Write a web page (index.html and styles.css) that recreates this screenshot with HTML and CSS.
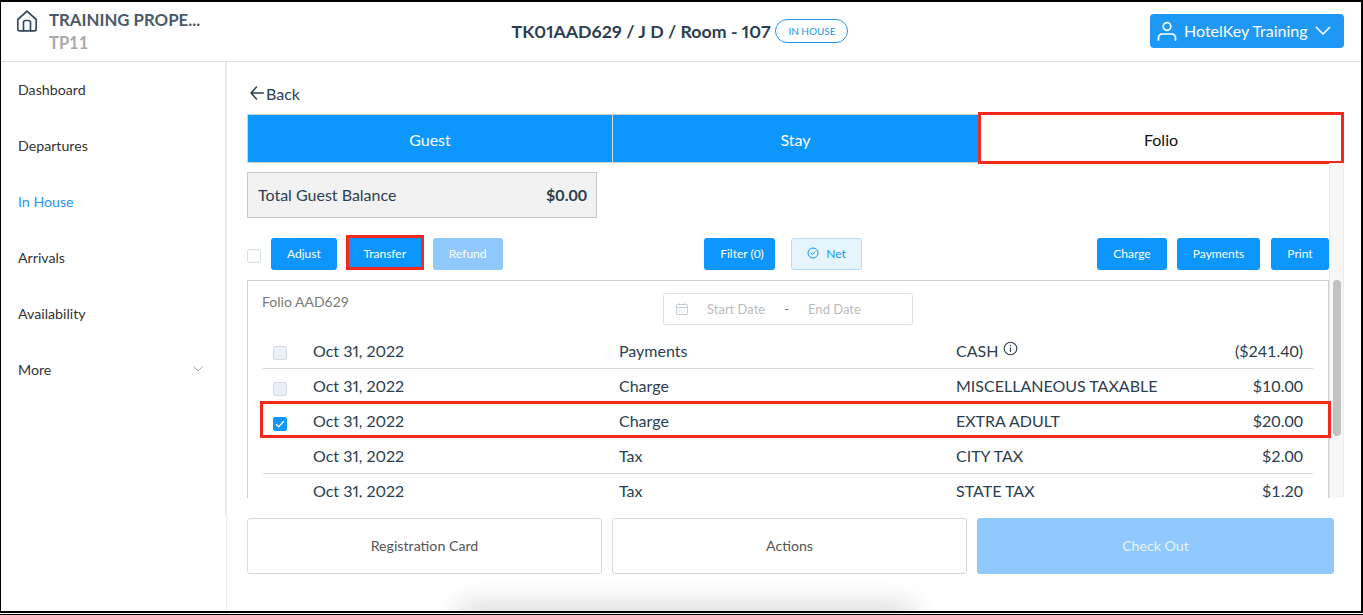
FILE: index.html

```html
<!DOCTYPE html>
<html lang="en">
<head>
  <meta charset="UTF-8" />
  <title>Folio</title>
  <link rel="stylesheet" href="styles.css">
</head>
<body>
  <div class="frame">
    <header class="topbar">
      <div class="property">
        <svg class="home-icon" width="22" height="22" viewBox="0 0 22 22" fill="none" stroke="#34495e" stroke-width="1.7" stroke-linejoin="round" stroke-linecap="round">
          <path d="M1.800 9.500 11 1.200l9.200 8.300V19a1.800 1.800 0 0 1-1.800 1.800H3.600A1.800 1.800 0 0 1 1.800 19z"/>
          <path d="M7.500 20.800V12.500a2 2 0 0 1 2-2h3a2 2 0 0 1 2 2v8.300"/>
        </svg>
        <div>
          <div class="property-name">TRAINING PROPE...</div>
          <div class="property-code">TP11</div>
        </div>
      </div>
      <div class="stay-title">
        <span>TK01AAD629 / J D / Room - 107</span>
        <span class="status-pill">IN HOUSE</span>
      </div>
      <button class="user-btn">
        <svg width="20" height="20" viewBox="0 0 20 20" fill="none" stroke="#fff" stroke-width="1.7" stroke-linecap="round">
          <circle cx="10" cy="5.500" r="3.800"/>
          <path d="M1.500 19v-2.500a3.500 3.500 0 0 1 3.500-3.500h10a3.500 3.500 0 0 1 3.500 3.500V19"/>
        </svg>
        <span>HotelKey Training</span>
        <svg width="16" height="10" viewBox="0 0 16 10" fill="none" stroke="#fff" stroke-width="1.700" stroke-linecap="round" stroke-linejoin="round">
          <path d="M1.500 1.500 8 8l6.500-6.500"/>
        </svg>
      </button>
    </header>

    <div class="layout">
      <div class="sidebar">
        <nav class="side-nav">
          <a>Dashboard</a>
          <a>Departures</a>
          <a class="active">In House</a>
          <a>Arrivals</a>
          <a>Availability</a>
          <a class="more">More
            <svg width="10" height="6" viewBox="0 0 10 6" fill="none" stroke="#9aa5b1" stroke-width="1">
              <path d="M.5.500 5 5 9.500.500"/>
            </svg>
          </a>
        </nav>
      </div>

      <main class="content">
        <div class="back">
          <svg width="14" height="14" viewBox="0 0 14 14" fill="none" stroke="#2c3e50" stroke-width="1.500" stroke-linecap="round" stroke-linejoin="round">
            <path d="M6.500 1 1 7l5.500 6M1 7h12.500"/>
          </svg>
          <span>Back</span>
        </div>

        <div class="tabs">
          <div class="tab">Guest</div>
          <div class="tab">Stay</div>
          <div class="tab tab-active">Folio</div>
        </div>

        <div class="scroll-area">
          <div class="scroll-body">
            <div class="balance">
              <span>Total Guest Balance</span>
              <strong>$0.00</strong>
            </div>

            <div class="toolbar">
              <div class="tool-group">
                <span class="check check-plain"></span>
                <button class="btn">Adjust</button>
                <button class="btn btn-marked">Transfer</button>
                <button class="btn btn-off">Refund</button>
              </div>
              <div class="tool-group mid-group">
                <button class="btn btn-filter">Filter (0)</button>
                <button class="btn btn-net">
                  <svg width="12" height="12" viewBox="0 0 12 12" fill="none" stroke="#0d96fb" stroke-width="1">
                    <circle cx="6" cy="6" r="5"/>
                    <path d="M3.800 6.200 5.400 7.700 8.200 4.700"/>
                  </svg>
                  Net
                </button>
              </div>
              <div class="tool-group right-group">
                <button class="btn btn-charge">Charge</button>
                <button class="btn btn-payments">Payments</button>
                <button class="btn btn-print">Print</button>
              </div>
            </div>

            <section class="folio">
              <div class="folio-head">
                <span class="folio-name">Folio AAD629</span>
                <div class="date-range">
                  <svg width="14" height="14" viewBox="0 0 14 14" fill="none" stroke="#c5cad1" stroke-width="1">
                    <rect x="1.500" y="2.500" width="11" height="10" rx="1"/>
                    <path d="M1.500 5.500h11M4 1v2M10 1v2M4 8h1M6.500 8h1M9 8h1M4 10h1M6.500 10h1M9 10h1"/>
                  </svg>
                  <span class="date-start">Start Date</span>
                  <span class="date-dash">-</span>
                  <span>End Date</span>
                </div>
              </div>

              <div class="row row-line">
                <span class="cell-check"><span class="check"></span></span>
                <span class="cell-date">Oct 31, 2022</span>
                <span class="cell-type">Payments</span>
                <span class="cell-desc">CASH
                  <svg class="info-icon" width="15" height="15" viewBox="0 0 15 15" fill="none" stroke="#2c3e50" stroke-width="1.100">
                    <circle cx="7.500" cy="7.500" r="6.300"/>
                    <path d="M7.500 6.500v4.500M7.500 4v1.300"/>
                  </svg>
                </span>
                <span class="cell-amount">($241.40)</span>
              </div>
              <div class="row">
                <span class="cell-check"><span class="check"></span></span>
                <span class="cell-date">Oct 31, 2022</span>
                <span class="cell-type">Charge</span>
                <span class="cell-desc">MISCELLANEOUS TAXABLE</span>
                <span class="cell-amount">$10.00</span>
              </div>
              <div class="row row-marked">
                <span class="cell-check">
                  <span class="check check-on">
                    <svg width="10" height="8" viewBox="0 0 10 8" fill="none" stroke="#fff" stroke-width="1.300">
                      <path d="M1 4.200 3.700 6.800 9 1"/>
                    </svg>
                  </span>
                </span>
                <span class="cell-date">Oct 31, 2022</span>
                <span class="cell-type">Charge</span>
                <span class="cell-desc">EXTRA ADULT</span>
                <span class="cell-amount">$20.00</span>
              </div>
              <div class="row row-line">
                <span class="cell-check"></span>
                <span class="cell-date">Oct 31, 2022</span>
                <span class="cell-type">Tax</span>
                <span class="cell-desc">CITY TAX</span>
                <span class="cell-amount">$2.00</span>
              </div>
              <div class="row">
                <span class="cell-check"></span>
                <span class="cell-date">Oct 31, 2022</span>
                <span class="cell-type">Tax</span>
                <span class="cell-desc">STATE TAX</span>
                <span class="cell-amount">$1.20</span>
              </div>
            </section>
          </div>

          <div class="scrollbar"><div class="scroll-thumb"></div></div>
        </div>

        <div class="actions">
          <button class="action">Registration Card</button>
          <button class="action">Actions</button>
          <button class="action action-off">Check Out</button>
        </div>
      </main>
    </div>
    <div class="bottom-shadow"></div>
  </div>
  <div class="edge-line"></div>
</body>
</html>
```

FILE: styles.css

```css
* {
  box-sizing: border-box;
}
html, body {
  margin: 0;
  height: 615px;
  overflow: hidden;
  background: #fff;
}
body {
  font-family: Lato, "Open Sans", sans-serif;
  color: #2c3e50;
}
button {
  font-family: inherit;
  cursor: pointer;
}
.frame {
  position: relative;
  height: 613px;
  border-top: 2px solid #000;
  border-left: 1px solid #000;
  border-right: 2px solid #000;
  border-bottom: 2px solid #000;
  display: flex;
  flex-direction: column;
  overflow: hidden;
}
.edge-line {
  height: 1px;
  margin-top: 1px;
  background: #000;
}

/* top bar */
.topbar {
  height: 60px;
  flex: none;
  border-bottom: 1px solid #e0e0e0;
  display: grid;
  grid-template-columns: 1fr auto 1fr;
  align-items: center;
  padding: 0 17px 0 15px;
}
.property {
  display: flex;
  align-items: flex-start;
  gap: 11px;
  align-self: start;
  margin-top: 8px;
}
.property-name {
  font-size: 16.8px;
  font-weight: 700;
  color: #4a5a6a;
  line-height: 20px;
  white-space: nowrap;
}
.property-code {
  font-size: 16.5px;
  font-weight: 700;
  color: #a8a8a8;
  line-height: 26px;
}
.stay-title {
  display: flex;
  align-items: center;
  gap: 5px;
  font-size: 17.75px;
  font-weight: 700;
  font-variant-numeric: proportional-nums;
  color: #2c3e50;
  margin-top: -1px;
}
.status-pill {
  height: 24px;
  width: 73px;
  border: 1px solid #2196f3;
  border-radius: 12px;
  font-size: 10px;
  font-weight: 400;
  color: #2196f3;
  display: flex;
  align-items: center;
  justify-content: center;
}
.user-btn {
  justify-self: end;
  width: 194px;
  height: 34px;
  background: #1e98f5;
  border: none;
  border-radius: 4px;
  color: #fff;
  font-size: 16px;
  display: flex;
  align-items: center;
  gap: 7px;
  padding: 0 9px 0 7px;
  margin-top: -2px;
}

/* sidebar */
.layout {
  flex: 1;
  display: flex;
  min-height: 0;
}
.sidebar {
  width: 226px;
  flex: none;
  border-right: 1px solid #ececec;
}
.side-nav {
  height: 453px;
  border-right: 1px solid #e3e3e3;
  display: flex;
  flex-direction: column;
}
.side-nav a {
  height: 56px;
  display: flex;
  align-items: center;
  justify-content: space-between;
  padding: 0 22px 2px 17px;
  font-size: 14.2px;
  color: #333;
}
.side-nav a.active {
  color: #1e98f5;
}

/* main */
.content {
  flex: 1;
  min-width: 0;
  padding: 0 17px 0 20px;
  display: flex;
  flex-direction: column;
}
.back {
  height: 52px;
  padding: 10px 0 0 3px;
  display: flex;
  align-items: center;
  gap: 2px;
  font-size: 16px;
}
.tabs {
  display: grid;
  grid-template-columns: 366px 366px 1fr;
  height: 49px;
  flex: none;
}
.tab {
  background: #0d96fb;
  color: #fff;
  font-size: 16px;
  display: flex;
  align-items: center;
  justify-content: center;
  padding-top: 2px;
  border-top: 1px solid #d0d0d0;
  border-bottom: 1px solid #d0d0d0;
  border-right: 1px solid #d8d8d8;
}
.tab:first-child {
  border-left: 1px solid #d0d0d0;
}
.tab-active {
  background: #fff;
  color: #111;
  border: none;
  padding-top: 3px;
  margin: -2px 0 -1px -1px;
  outline: 3px solid #f5281c;
  outline-offset: -3px;
}
.scroll-area {
  height: 335px;
  flex: none;
  display: flex;
  overflow: hidden;
}
.scroll-body {
  flex: 1;
  min-width: 0;
}
.scrollbar {
  width: 15px;
  flex: none;
  background: #f7f7f7;
  border-left: 1px solid #e8e8e8;
  border-right: 1px solid #ececec;
  padding: 117px 2px 0 3px;
}
.scroll-thumb {
  height: 156px;
  background: #c1c1c1;
  border-radius: 5px;
}
.balance {
  width: 350px;
  height: 46px;
  margin-top: 9px;
  background: #f2f2f2;
  border: 1px solid #c8c8c8;
  padding: 0 9px 2px 10px;
  display: flex;
  align-items: center;
  justify-content: space-between;
  font-size: 16px;
}
.toolbar {
  margin-top: 20px;
  height: 32px;
  display: grid;
  grid-template-columns: 457px 393px 1fr;
}
.tool-group {
  display: flex;
  align-items: flex-end;
  gap: 9px;
  height: 32px;
}
.mid-group {
  gap: 16px;
}
.right-group {
  justify-content: flex-end;
  gap: 10px;
}
.btn {
  height: 32px;
  padding: 0 16px 2px;
  background: #0d96fb;
  color: #fff;
  border: none;
  border-radius: 3px;
  font-size: 12px;
  flex: none;
}
.btn-marked {
  width: 78px;
  height: 35px;
  padding-top: 3px;
  border-radius: 0;
  outline: 3px solid #f5281c;
  outline-offset: -3px;
}
.btn-off {
  background: #8fc9fd;
}
.btn-filter {
  width: 71px;
  padding: 0 0 2px 5px;
}
.btn-net {
  width: 71px;
  display: flex;
  align-items: center;
  justify-content: center;
  gap: 7px;
  background: #e6f4fe;
  color: #0d96fb;
  border: 1px solid #b5dcfb;
  padding: 0 0 2px;
}
.btn-charge {
  width: 70px;
  padding: 0 0 2px;
}
.btn-payments {
  width: 83px;
  padding: 0 0 2px;
}
.btn-print {
  width: 58px;
  margin-left: 1px;
  padding: 0 0 2px;
}
.check {
  width: 14px;
  height: 14px;
  border: 1px solid #d5dae3;
  border-radius: 2px;
  background: #eaf0f8;
  display: flex;
  align-items: center;
  justify-content: center;
  flex: none;
}
.check-plain {
  background: #fff;
  margin: 0 1px 7px 0;
}
.check-on {
  background: #0d96fb;
  border-color: #0d96fb;
}

/* folio table */
.folio {
  margin-top: 10px;
  height: 240px;
  border: 1px solid #d0d0d0;
  padding: 0 15px;
}
.folio-head {
  height: 53px;
  display: flex;
  align-items: flex-start;
}
.folio-name {
  width: 400px;
  margin-top: 12px;
  margin-left: -1px;
  margin-right: 1px;
  font-size: 14px;
  color: #7a7a7a;
}
.date-range {
  width: 250px;
  height: 32px;
  margin-top: 12px;
  border: 1px solid #dde1e8;
  border-radius: 3px;
  display: flex;
  align-items: center;
  padding-left: 11px;
  font-size: 13px;
  color: #bcbcbc;
}
.date-start {
  margin-left: 18px;
}
.date-dash {
  margin: 0 19px;
  color: #777;
}
.row {
  position: relative;
  height: 35px;
  display: flex;
  align-items: center;
  padding-bottom: 2px;
  font-size: 16px;
}
.row-line {
  border-bottom: 1px solid #d5d5d5;
}
.row-marked::after {
  content: "";
  position: absolute;
  left: -3px;
  right: -18px;
  top: -3px;
  bottom: 1px;
  border: 3px solid #f5281c;
}
.cell-check {
  width: 50px;
  padding: 6px 0 0 10px;
}
.cell-date {
  width: 306px;
  font-variant-numeric: proportional-nums;
}
.cell-type {
  width: 337px;
}
.cell-desc {
  flex: 1;
  display: flex;
  align-items: center;
  gap: 5px;
}
.info-icon {
  margin-bottom: 4px;
}
.cell-amount {
  padding-right: 10px;
}

/* bottom buttons */
.actions {
  margin-top: 20px;
  display: grid;
  grid-template-columns: 355px 355px 357px;
  gap: 10px;
  height: 56px;
  flex: none;
}
.action {
  background: #fff;
  border: 1px solid #d5d9e2;
  border-radius: 3px;
  padding-bottom: 2px;
  color: #555;
  font-size: 14.2px;
}
.action-off {
  background: #8fc9fd;
  border-color: #8fc9fd;
  color: #e8f4ff;
}
.bottom-shadow {
  position: absolute;
  left: 465px;
  width: 440px;
  bottom: -10px;
  height: 10px;
  box-shadow: 0 0 26px 8px rgba(0, 0, 0, .14);
}
```
